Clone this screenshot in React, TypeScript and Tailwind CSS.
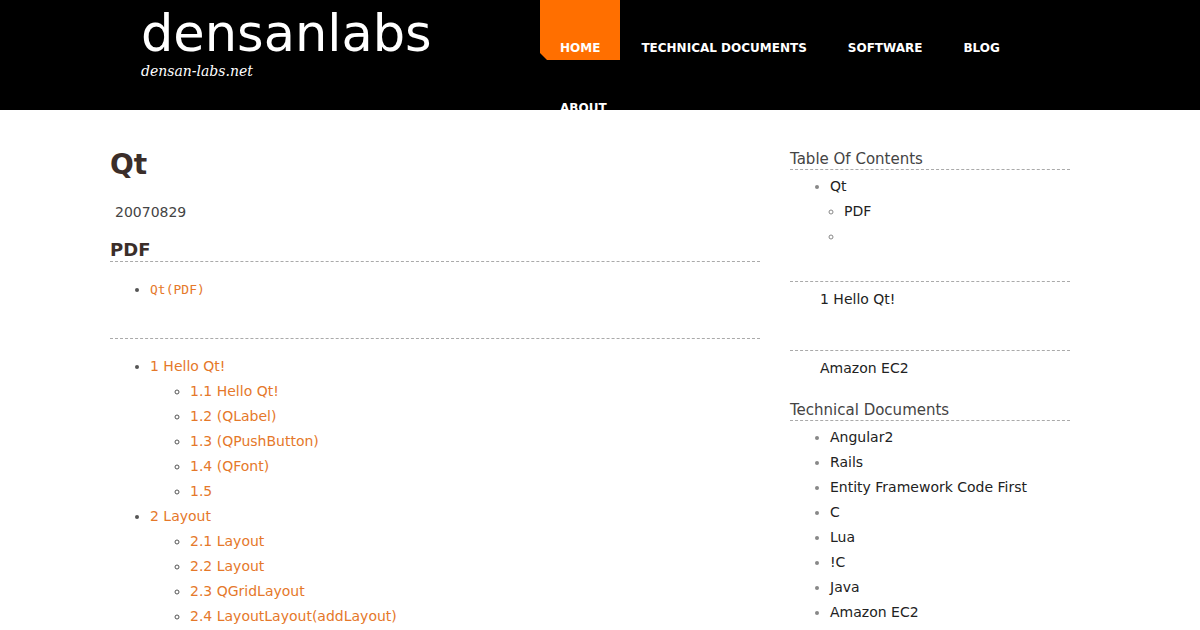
const navItems = ["Home", "Technical Documents", "Software", "Blog", "About"];

const toc = [
  {
    label: "1 Hello Qt!",
    children: ["1.1 Hello Qt!", "1.2 (QLabel)", "1.3 (QPushButton)", "1.4 (QFont)", "1.5"],
  },
  {
    label: "2 Layout",
    children: ["2.1 Layout", "2.2 Layout", "2.3 QGridLayout", "2.4 LayoutLayout(addLayout)"],
  },
];

const techDocs = ["Angular2", "Rails", "Entity Framework Code First", "C", "Lua", "!C", "Java", "Amazon EC2"];

export default function App() {
  return (
    <div className="min-h-[630px] bg-white font-['DejaVu_Sans',sans-serif] text-[#444]">
      <header className="h-[110px] overflow-hidden bg-black">
        <div className="flex pl-[141px]">
          <div className="w-[399px] shrink-0 pt-[8px]">
            <div className="text-[51px] leading-none text-white">densanlabs</div>
            <div className="mt-[5px] font-['DejaVu_Serif',serif] text-[14px] italic leading-none text-white">
              densan-labs.net
            </div>
          </div>
          <ul className="flex w-[500px] flex-wrap gap-x-[1px]">
            {navItems.map((item, i) => (
              <li
                key={item}
                className={`relative h-[60px] px-5 pt-[40px] text-[12px] font-bold uppercase leading-[16px] text-white ${
                  i === 0 ? "bg-[#ff6f00]" : ""
                }`}
              >
                {item}
                {i === 0 && (
                  <span className="absolute bottom-0 left-0 h-0 w-0 border-t-[7px] border-r-[7px] border-t-transparent border-r-transparent border-b-0 border-l-[7px] border-l-black" />
                )}
              </li>
            ))}
          </ul>
        </div>
      </header>

      <main className="flex w-[960px] gap-[30px] pt-[38px] ml-[110px]">
        <article className="w-[650px] shrink-0">
          <h1 className="text-[28px] font-bold leading-[34px] text-[#3b2e2a]">Qt</h1>
          <p className="mt-[20px] pl-[5px] text-[14px] leading-[20px] text-[#444]">20070829</p>

          <h2 className="mt-[17px] border-b border-dashed border-[#aaa] text-[18px] font-bold leading-[22px] text-[#3b2e2a]">
            PDF
          </h2>
          <ul className="mt-[18px] list-disc pl-10 marker:text-[#555]">
            <li className="font-['DejaVu_Sans_Mono',monospace] text-[13px] leading-[20px] text-[#e5782a]">
              Qt(PDF)
            </li>
          </ul>

          <div className="mt-[17px] h-[22px] border-b border-dashed border-[#aaa]" />

          <ul className="mt-[15px] list-disc pl-10 text-[14px] leading-[25px] text-[#e5782a] marker:text-[#555]">
            {toc.map((sec) => (
              <li key={sec.label}>
                {sec.label}
                <ul className="list-[circle] pl-10">
                  {sec.children.map((c) => (
                    <li key={c}>{c}</li>
                  ))}
                </ul>
              </li>
            ))}
          </ul>
        </article>

        <aside className="w-[280px] shrink-0 pt-[1px] text-[14px] text-[#222]">
          <h3 className="border-b border-dashed border-[#aaa] text-[15px] leading-[20px] text-[#444]">
            Table Of Contents
          </h3>
          <ul className="mt-[4px] list-disc pl-10 leading-[25px] marker:text-[#888]">
            <li>
              Qt
              <ul className="list-[circle] pl-[14px]">
                <li>PDF</li>
                <li>&nbsp;</li>
              </ul>
            </li>
          </ul>

          <div className="mt-[13px] h-[20px] border-b border-dashed border-[#aaa]" />
          <p className="mt-[5px] pl-[30px] leading-[25px]">1 Hello Qt!</p>

          <div className="mt-[19px] h-[20px] border-b border-dashed border-[#aaa]" />
          <p className="mt-[5px] pl-[30px] leading-[25px]">Amazon EC2</p>

          <h3 className="mt-[19px] border-b border-dashed border-[#aaa] text-[15px] leading-[20px] text-[#444]">
            Technical Documents
          </h3>
          <ul className="mt-[4px] list-disc pl-10 leading-[25px] marker:text-[#888]">
            {techDocs.map((d) => (
              <li key={d}>{d}</li>
            ))}
          </ul>
        </aside>
      </main>
    </div>
  );
}
